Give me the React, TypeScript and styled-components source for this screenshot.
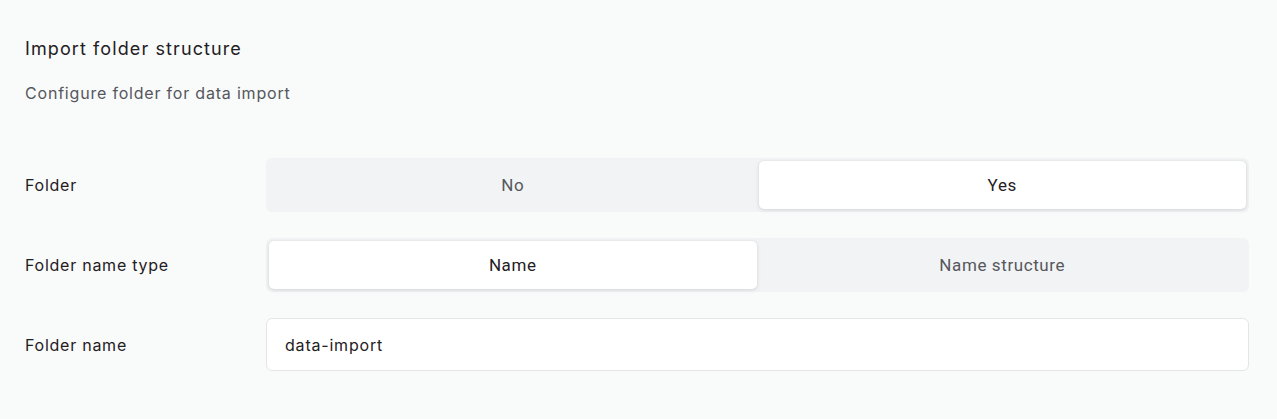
import React, { useState } from "react";
import styled, { createGlobalStyle } from "styled-components";

const Global = createGlobalStyle`
  html, body { margin: 0; padding: 0; background: #f9fafa; }
  body { font-family: Inter, "Noto Sans", sans-serif; color: #1f2023; }
  * { box-sizing: border-box; }
`;

const Page = styled.div`
  padding: 37px 28px 0 25px;
  min-height: 419px;
  background: #f9fafa;
`;

const Title = styled.h2`
  margin: 0;
  font-size: 18px;
  font-weight: 400;
  line-height: 24px;
  letter-spacing: 1.1px;
  color: #1f2023;
`;

const Subtitle = styled.p`
  margin: 21px 0 0;
  font-size: 16px;
  line-height: 22px;
  letter-spacing: 0.8px;
  color: #55575c;
`;

const Form = styled.div`
  margin-top: 54px;
  display: flex;
  flex-direction: column;
  gap: 26px;
`;

const Row = styled.div`
  display: grid;
  grid-template-columns: 241px 1fr;
  align-items: center;
`;

const Label = styled.div`
  font-size: 16px;
  letter-spacing: 0.75px;
  color: #1f2023;
`;

const Segmented = styled.div`
  display: grid;
  grid-template-columns: 1fr 1fr;
  gap: 2px;
  height: 54px;
  padding: 3px;
  background: #f2f3f5;
  border-radius: 6px;
`;

const Segment = styled.button<{ $active: boolean }>`
  border: none;
  border-radius: 5px;
  font-family: Roboto, "Liberation Sans", sans-serif;
  font-size: 17px;
  letter-spacing: 0.6px;
  cursor: pointer;
  background: ${(p) => (p.$active ? "#ffffff" : "transparent")};
  color: ${(p) => (p.$active ? "#1f2023" : "#55575c")};
  box-shadow: ${(p) =>
    p.$active ? "0 1px 4px rgba(0,0,0,0.12), 0 0 2px rgba(0,0,0,0.06)" : "none"};
`;

const Input = styled.input`
  height: 53px;
  width: 100%;
  padding: 0 18px;
  border: 1px solid #e4e5e7;
  border-radius: 6px;
  background: #ffffff;
  font-family: Inter, "Noto Sans", sans-serif;
  font-size: 16px;
  letter-spacing: 0.8px;
  color: #1f2023;
  outline: none;
`;

function Toggle({ options, value, onChange }: { options: string[]; value: string; onChange: (v: string) => void }) {
  return (
    <Segmented>
      {options.map((o) => (
        <Segment key={o} $active={o === value} onClick={() => onChange(o)}>
          {o}
        </Segment>
      ))}
    </Segmented>
  );
}

export default function App() {
  const [folder, setFolder] = useState("Yes");
  const [type, setType] = useState("Name");
  const [name, setName] = useState("data-import");
  return (
    <Page>
      <Global />
      <Title>Import folder structure</Title>
      <Subtitle>Configure folder for data import</Subtitle>
      <Form>
        <Row>
          <Label>Folder</Label>
          <Toggle options={["No", "Yes"]} value={folder} onChange={setFolder} />
        </Row>
        <Row>
          <Label>Folder name type</Label>
          <Toggle options={["Name", "Name structure"]} value={type} onChange={setType} />
        </Row>
        <Row>
          <Label>Folder name</Label>
          <Input value={name} onChange={(e) => setName(e.target.value)} />
        </Row>
      </Form>
    </Page>
  );
}
